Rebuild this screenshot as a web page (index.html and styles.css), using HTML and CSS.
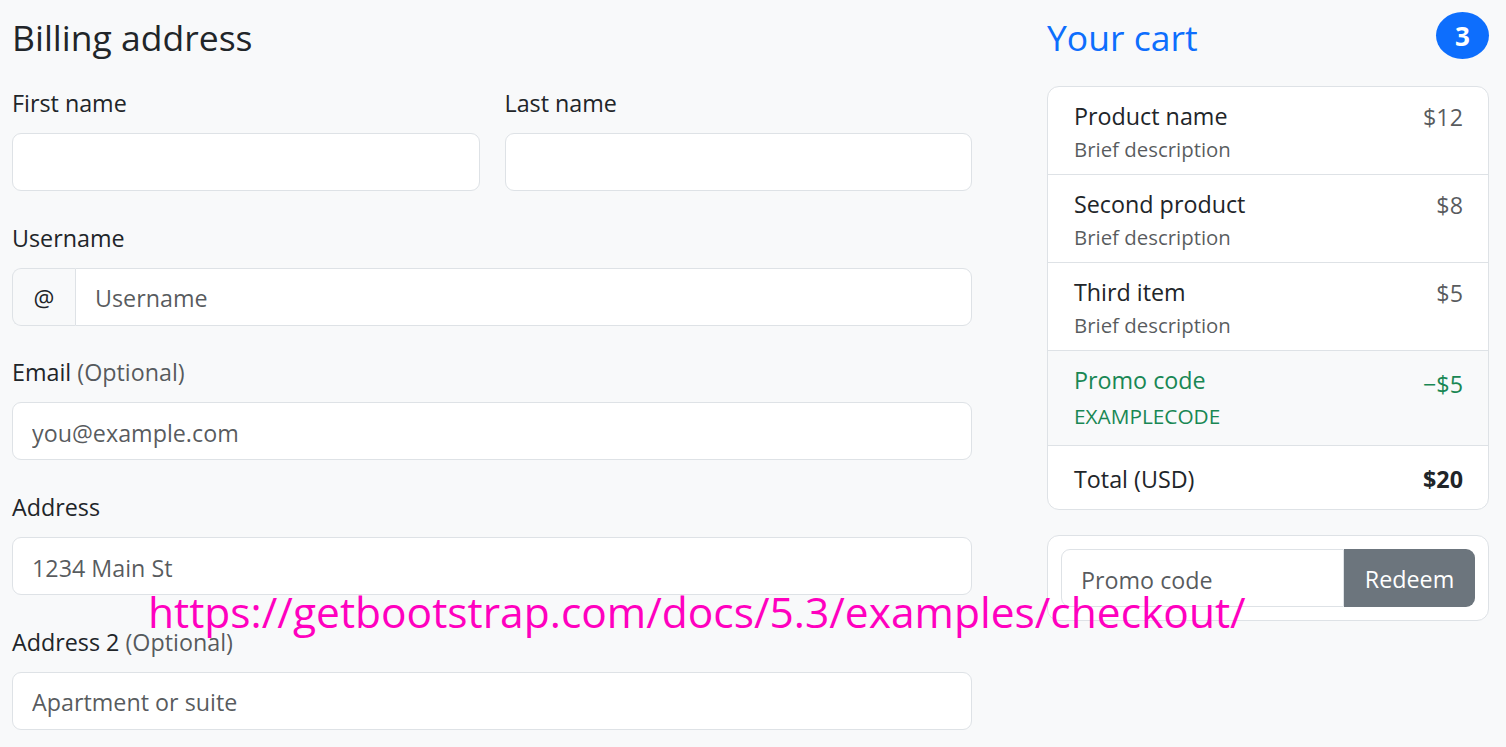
FILE: index.html
```html
<!DOCTYPE html>
<html lang="en">
<head>
<meta charset="utf-8">
<title>Checkout</title>
<link rel="stylesheet" href="styles.css">
</head>
<body>
<main class="page">
  <section class="billing">
    <h4 class="billing-title">Billing address</h4>
    <form class="form-grid">
      <div class="field">
        <label class="field-label" for="firstName">First name</label>
        <input class="field-input" id="firstName" type="text">
      </div>
      <div class="field">
        <label class="field-label" for="lastName">Last name</label>
        <input class="field-input" id="lastName" type="text">
      </div>
      <div class="field field-full">
        <label class="field-label" for="username">Username</label>
        <div class="input-group">
          <span class="input-addon">@</span>
          <input class="field-input group-input" id="username" type="text" placeholder="Username">
        </div>
      </div>
      <div class="field field-full">
        <label class="field-label" for="email">Email <span class="muted">(Optional)</span></label>
        <input class="field-input" id="email" type="email" placeholder="you@example.com">
      </div>
      <div class="field field-full">
        <label class="field-label" for="address">Address</label>
        <input class="field-input" id="address" type="text" placeholder="1234 Main St">
      </div>
      <div class="field field-full">
        <label class="field-label" for="address2">Address 2 <span class="muted">(Optional)</span></label>
        <input class="field-input" id="address2" type="text" placeholder="Apartment or suite">
      </div>
    </form>
  </section>

  <aside class="cart">
    <div class="cart-header">
      <h4 class="cart-title">Your cart</h4>
      <span class="cart-badge">3</span>
    </div>
    <ul class="cart-list">
      <li class="cart-item">
        <div>
          <h6 class="item-name">Product name</h6>
          <small class="item-desc">Brief description</small>
        </div>
        <span class="item-price">$12</span>
      </li>
      <li class="cart-item">
        <div>
          <h6 class="item-name">Second product</h6>
          <small class="item-desc">Brief description</small>
        </div>
        <span class="item-price">$8</span>
      </li>
      <li class="cart-item">
        <div>
          <h6 class="item-name">Third item</h6>
          <small class="item-desc">Brief description</small>
        </div>
        <span class="item-price">$5</span>
      </li>
      <li class="cart-item promo-item">
        <div class="promo-text">
          <h6 class="item-name">Promo code</h6>
          <small class="promo-code">EXAMPLECODE</small>
        </div>
        <span class="promo-price">−$5</span>
      </li>
      <li class="cart-item total-item">
        <span>Total (USD)</span>
        <strong>$20</strong>
      </li>
    </ul>
    <form class="promo-card">
      <div class="input-group">
        <input class="field-input promo-input" type="text" placeholder="Promo code">
        <button class="redeem-btn" type="button">Redeem</button>
      </div>
    </form>
  </aside>

  <div class="watermark">https://getbootstrap.com/docs/5.3/examples/checkout/</div>
</main>
</body>
</html>
```

FILE: styles.css
```css
* {
  box-sizing: border-box;
}

html, body {
  margin: 0;
  padding: 0;
}

body {
  background: #f8f9fa;
  color: #212529;
  font-family: "Open Sans", "Noto Sans", sans-serif;
  font-size: 23.3px;
  overflow: hidden;
}

.page {
  position: relative;
  display: flex;
  align-items: flex-start;
  padding-left: 12px;
  height: 747px;
}

.billing {
  width: 960px;
  flex: none;
}

.billing-title {
  margin: 0 0 27px;
  padding-top: 16px;
  font-size: 35.5px;
  font-weight: 400;
  line-height: 42px;
}

.form-grid {
  display: grid;
  grid-template-columns: 1fr 1fr;
  column-gap: 25px;
  row-gap: 28.7px;
  margin: 0;
}

.field-full {
  grid-column: 1 / -1;
}

.field-label {
  display: block;
  line-height: 36px;
  margin-bottom: 12px;
}

.muted {
  color: rgba(33, 37, 41, 0.75);
}

.field-input {
  display: block;
  width: 100%;
  height: 58px;
  padding: 3px 19px 0;
  border: 1px solid #dee2e6;
  border-radius: 9px;
  background: #fff;
  font-family: inherit;
  font-size: 23.3px;
  color: #212529;
  outline: none;
}

.field-input::placeholder {
  color: rgba(33, 37, 41, 0.75);
}

.input-group {
  display: flex;
  align-items: stretch;
}

.input-addon {
  display: flex;
  align-items: center;
  justify-content: center;
  width: 63px;
  flex: none;
  height: 58px;
  padding-top: 2px;
  background: #f8f9fa;
  border: 1px solid #dee2e6;
  border-right: none;
  border-radius: 9px 0 0 9px;
}

.group-input {
  flex: 1;
  border-radius: 0 9px 9px 0;
}

.cart {
  width: 442px;
  flex: none;
  margin-left: 75px;
}

.cart-header {
  display: flex;
  justify-content: space-between;
  align-items: center;
  margin: 12px 0 27px;
  height: 47px;
}

.cart-title {
  margin: 0;
  font-size: 35.5px;
  font-weight: 400;
  line-height: 42px;
  color: #0d6efd;
  padding-top: 3px;
}

.cart-badge {
  display: flex;
  align-items: center;
  justify-content: center;
  width: 53px;
  height: 47px;
  border-radius: 50%;
  background: #0d6efd;
  color: #fff;
  font-size: 26px;
  font-weight: 700;
}

.cart-list {
  list-style: none;
  margin: 0;
  padding: 0;
  background: #fff;
  border: 1px solid #dee2e6;
  border-radius: 12px;
  overflow: hidden;
}

.cart-item {
  display: flex;
  justify-content: space-between;
  align-items: flex-start;
  padding: 14px 25px 11px 26px;
  border-top: 1px solid #dee2e6;
}

.cart-item:first-child {
  border-top: none;
}

.item-name {
  margin: 0;
  font-size: 23.3px;
  font-weight: 400;
  line-height: 30px;
}

.item-desc {
  display: block;
  font-size: 20.4px;
  line-height: 32px;
  padding-top: 2px;
  height: 32px;
  color: rgba(33, 37, 41, 0.75);
}

.item-price {
  line-height: 30px;
  padding-top: 1px;
  color: rgba(33, 37, 41, 0.75);
}

.promo-item {
  background: #f8f9fa;
  padding-bottom: 10px;
  color: #198754;
}

.promo-code {
  display: block;
  font-size: 20.8px;
  line-height: 40px;
  padding-top: 1px;
  height: 40px;
}

.promo-price {
  line-height: 30px;
  padding-top: 4px;
}

.total-item {
  align-items: center;
  padding: 16px 25px 13px 26px;
  line-height: 34px;
}

.total-item strong {
  font-weight: 700;
}

.promo-card {
  margin: 25px 0 0;
  padding: 13px;
  background: #fff;
  border: 1px solid #dee2e6;
  border-radius: 12px;
}

.promo-input {
  flex: 1;
  min-width: 0;
  border-radius: 9px 0 0 9px;
}

.redeem-btn {
  width: 131px;
  flex: none;
  height: 58px;
  padding-top: 3px;
  border: none;
  border-radius: 0 9px 9px 0;
  background: #6c757d;
  color: #fff;
  font-family: inherit;
  font-size: 23.3px;
}

.watermark {
  position: absolute;
  left: 148px;
  top: 584px;
  font-size: 42.5px;
  line-height: 56px;
  color: #ff00bf;
  white-space: nowrap;
  pointer-events: none;
}
```
